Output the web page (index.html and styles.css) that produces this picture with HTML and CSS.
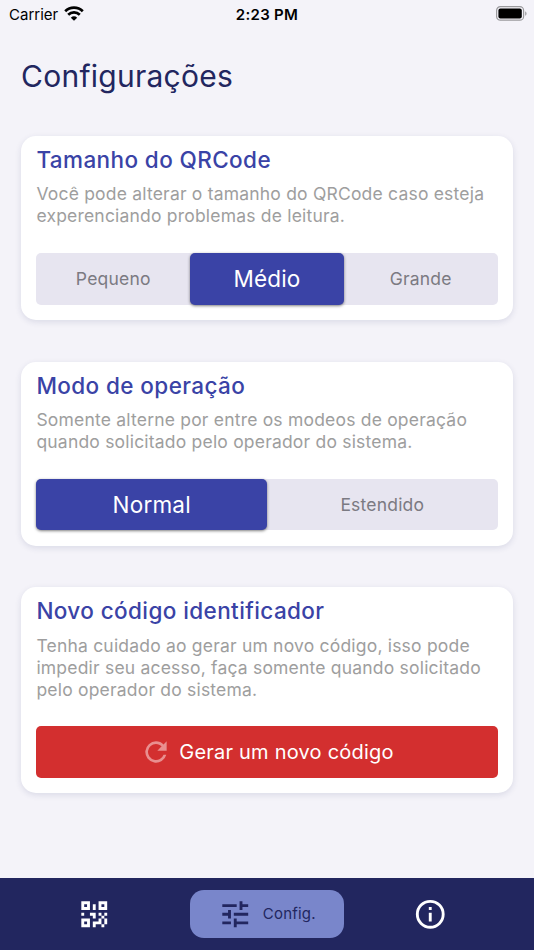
FILE: index.html
```html
<!DOCTYPE html>
<html lang="pt-BR">
  <head>
    <meta charset="utf-8">
    <title>Configurações</title>
    <link rel="stylesheet" href="styles.css">
  </head>
  <body>
    <header class="status-bar">
      <div class="carrier">
        <span>Carrier</span>
        <svg class="wifi" viewBox="0 0 20 15">
          <path d="M1.2 5.3a12.6 12.6 0 0 1 17.6 0M4.2 8.8a8.3 8.3 0 0 1 11.6 0" fill="none" stroke="#000" stroke-width="2.7"/>
          <path d="M6.8 11.7a4.8 4.8 0 0 1 6.4 0L10 14.8z"/>
        </svg>
      </div>
      <div class="clock">2:23 PM</div>
      <div class="battery">
        <svg viewBox="0 0 31 15">
          <rect x=".6" y=".6" width="27" height="13.6" rx="3.8" fill="none" stroke="#9a9a9d" stroke-width="1.2"/>
          <rect x="2.4" y="2.4" width="23.4" height="10" rx="2"/>
          <path d="M29.2 5.2c1.8.8 1.8 3.8 0 4.6z" fill="#9a9a9d"/>
        </svg>
      </div>
    </header>

    <main>
      <h1>Configurações</h1>

      <section class="card">
        <h2>Tamanho do QRCode</h2>
        <p>Você pode alterar o tamanho do QRCode caso esteja<br>experenciando problemas de leitura.</p>
        <div class="segmented">
          <button type="button">Pequeno</button>
          <button type="button" class="selected">Médio</button>
          <button type="button">Grande</button>
        </div>
      </section>

      <section class="card">
        <h2>Modo de operação</h2>
        <p>Somente alterne por entre os modeos de operação<br>quando solicitado pelo operador do sistema.</p>
        <div class="segmented">
          <button type="button" class="selected">Normal</button>
          <button type="button">Estendido</button>
        </div>
      </section>

      <section class="card">
        <h2>Novo código identificador</h2>
        <p>Tenha cuidado ao gerar um novo código, isso pode<br>impedir seu acesso, faça somente quando solicitado<br>pelo operador do sistema.</p>
        <button type="button" class="danger">
          <svg viewBox="0 0 24 24"><path d="M17.65 6.35A7.95 7.95 0 0 0 12 4a8 8 0 1 0 7.73 10h-2.08A6 6 0 1 1 12 6c1.66 0 3.14.69 4.22 1.78L13 11h7V4z"/></svg>
          <span>Gerar um novo código</span>
        </button>
      </section>
    </main>

    <nav class="tabs">
      <a class="tab">
        <svg viewBox="0 0 24 24"><path d="M3,11H5V13H3V11M11,5H13V9H11V5M9,11H13V15H11V13H9V11M15,11H17V13H19V11H21V13H19V15H21V19H19V21H17V19H13V21H11V17H15V15H17V13H15V11M19,19V15H17V19H19M15,3H21V9H15V3M17,5V7H19V5H17M3,3H9V9H3V3M5,5V7H7V5H5M3,15H9V21H3V15M5,17V19H7V17H5Z"/></svg>
      </a>
      <a class="tab active">
        <svg viewBox="0 0 24 24"><path d="M3 17v2h6v-2H3zM3 5v2h10V5H3zm10 16v-2h8v-2h-8v-2h-2v6h2zM7 9v2H3v2h4v2h2V9H7zm14 4v-2H11v2h10zm-6-4h2V7h4V5h-4V3h-2v6z"/></svg>
        <span>Config.</span>
      </a>
      <a class="tab about">
        <svg viewBox="0 0 24 24"><path d="M11 7h2v2h-2zm0 4h2v6h-2zm1-9a10 10 0 1 0 0 20 10 10 0 0 0 0-20zm0 18a8 8 0 1 1 0-16 8 8 0 0 1 0 16z"/></svg>
      </a>
    </nav>
  </body>
</html>
```

FILE: styles.css
```css
* {
  box-sizing: border-box;
}

body {
  margin: 0;
  height: 950px;
  display: flex;
  flex-direction: column;
  overflow: hidden;
  background-color: #f4f3f9;
  font-family: Inter, sans-serif;
}

.status-bar {
  height: 28px;
  padding: 0 7px 0 9px;
  display: grid;
  grid-template-columns: 1fr auto 1fr;
  align-items: center;
  font-size: 15px;
}

.carrier {
  display: flex;
  align-items: center;
  gap: 6px;
}

.wifi {
  width: 20px;
  height: 15px;
  margin-top: -2px;
}

.clock {
  margin-left: -2px;
  font-weight: 600;
  letter-spacing: 0.3px;
}

.battery {
  display: flex;
  justify-content: flex-end;
}

.battery svg {
  width: 31px;
  height: 15px;
  margin-top: -2px;
}

main {
  flex: 1;
  padding: 0 21px;
}

h1 {
  margin: 28px 0 40px;
  height: 40px;
  line-height: 40px;
  font-size: 30px;
  font-weight: 400;
  letter-spacing: 0.25px;
  color: #22265f;
}

.card {
  margin-bottom: 41.3px;
  padding: 10.3px 15.4px 15.6px;
  background-color: #fff;
  border-radius: 15px;
  box-shadow: 0 2px 6px rgba(34, 38, 95, 0.12);
}

h2 {
  margin: 0;
  line-height: 27px;
  font-size: 22.5px;
  font-weight: 450;
  letter-spacing: 0.4px;
  color: #3a43a6;
}

p {
  margin: 10.2px 0 25.7px;
  line-height: 22px;
  font-size: 17.5px;
  letter-spacing: 0.2px;
  white-space: nowrap;
  color: #9e9e9e;
}

button {
  border: none;
  padding: 0;
  background: none;
  font-family: inherit;
  cursor: pointer;
}

.segmented {
  display: flex;
  height: 51.5px;
  background-color: #e7e5f0;
  border-radius: 5px;
}

.segmented button {
  flex: 1;
  border-radius: 5px;
  font-size: 17.5px;
  letter-spacing: 0.2px;
  color: #7b7a82;
}

.segmented .selected {
  background-color: #3a43a6;
  box-shadow: 0 1px 3px rgba(0, 0, 0, 0.5);
  font-size: 22.5px;
  color: #fff;
}

.danger {
  width: 100%;
  height: 51.5px;
  display: flex;
  align-items: center;
  justify-content: center;
  gap: 7px;
  background-color: #d32f2f;
  border-radius: 5px;
  font-size: 20px;
  letter-spacing: 0.22px;
  color: #fff;
}

.danger svg {
  width: 32px;
  height: 32px;
  fill: #e98f8f;
}

.tabs {
  height: 72.5px;
  padding: 0 37px 0 17px;
  display: flex;
  align-items: center;
  justify-content: space-between;
  background-color: #22265f;
}

.tab {
  width: 154px;
  height: 48px;
  display: flex;
  align-items: center;
  justify-content: center;
  gap: 10px;
  border-radius: 14px;
}

.tab svg {
  width: 34.5px;
  height: 34.5px;
  fill: #fff;
}

.about {
  width: 134px;
}

.active {
  background-color: #7986cb;
  font-size: 15px;
  letter-spacing: 0.2px;
  color: #22265f;
}

.active svg {
  fill: #22265f;
}
```
